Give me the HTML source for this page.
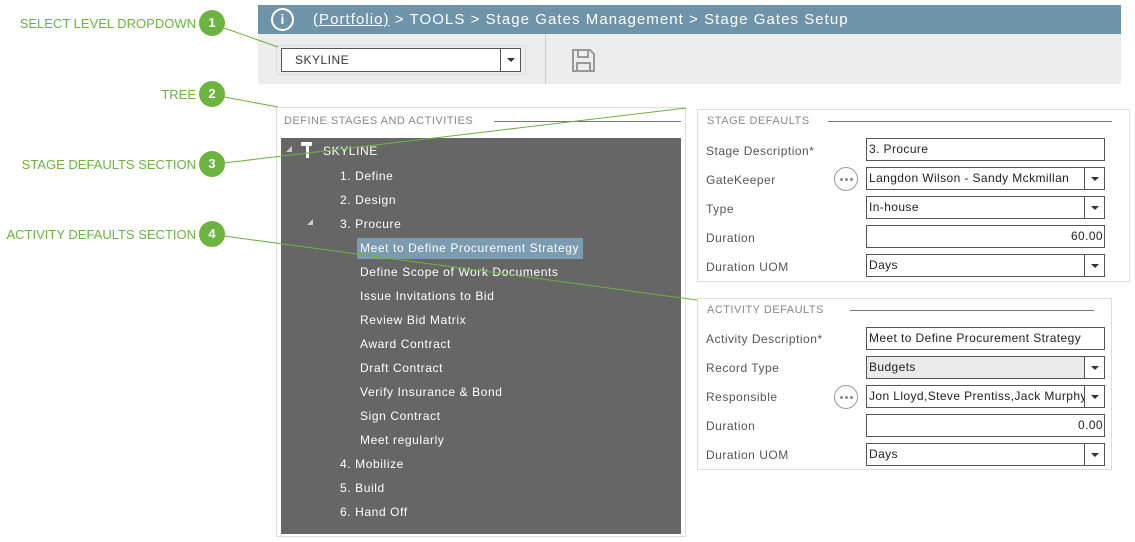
<!DOCTYPE html>
<html><head><meta charset="utf-8"><style>
*{box-sizing:border-box;margin:0;padding:0}
body{width:1135px;height:542px;background:#fff;position:relative;overflow:hidden;font-family:"Liberation Sans",sans-serif}
.a{position:absolute}
.co{position:absolute;color:#6cb33f;font-size:13px;text-align:right;width:200px;left:-4px}
.cir{position:absolute;width:26px;height:26px;border-radius:50%;background:#6cb33f;color:#fff;font-weight:bold;font-size:13px;text-align:center;line-height:26px}
.t{position:absolute;color:#fff;font-size:12px;letter-spacing:0.6px;white-space:nowrap}
.lbl{position:absolute;color:#555;font-size:12px;letter-spacing:0.5px;left:8px}
.in{position:absolute;left:168px;width:239px;height:23px;border:1px solid #555;background:#fff;font-size:12px;letter-spacing:0.4px;line-height:21px;padding-left:2px;color:#222;white-space:nowrap;overflow:hidden}
.dd::after{content:"";position:absolute;right:0;top:0;width:19px;height:21px;border-left:1px solid #555;background:#fff}
.dd::before{content:"";position:absolute;right:5px;top:9px;border-left:4px solid transparent;border-right:4px solid transparent;border-top:4px solid #333;z-index:2}
.dots{position:absolute;left:136px;width:24px;height:24px;border:1px solid #999;border-radius:50%}
.dots i{position:absolute;top:10px;width:3px;height:3px;border-radius:50%;background:#888}
.sec{position:absolute;border:1px solid #ddd;background:#fff}
.st{position:absolute;left:9px;top:5px;color:#888;font-size:11px;letter-spacing:0.5px}
</style></head><body>
<div class="a" style="left:258px;top:5px;width:863px;height:29px;background:#6f94a9"></div>
<div class="a" style="left:271px;top:8px;width:23px;height:23px;border:2px solid #fff;border-radius:50%;color:#fff;font-size:14px;font-weight:bold;text-align:center;line-height:19px">i</div>
<div class="a" style="left:313px;top:11px;color:#fff;font-size:15px;letter-spacing:1.05px;white-space:nowrap"><u>(Portfolio)</u> &gt; TOOLS &gt; Stage Gates Management &gt; Stage Gates Setup</div>
<div class="a" style="left:258px;top:34px;width:863px;height:50px;background:#ededed"></div>
<div class="a" style="left:545px;top:34px;width:1px;height:50px;background:#ccc"></div>
<div class="a" style="left:276px;top:45px;width:250px;height:30px;border:1px solid #ddd"></div>
<div class="a" style="left:281px;top:48px;width:240px;height:24px;border:1px solid #555;background:#fff;font-size:12px;letter-spacing:0.5px;line-height:22px;padding-left:13px;color:#333">SKYLINE</div>
<div class="a" style="left:500px;top:48px;width:21px;height:24px;border:1px solid #555;background:#fff"></div>
<div class="a" style="left:507px;top:58px;border-left:4px solid transparent;border-right:4px solid transparent;border-top:4px solid #333"></div>
<svg class="a" style="left:571px;top:48px" width="25" height="25" viewBox="0 0 25 25"><path d="M2 2h17l4 4v17H2z" fill="none" stroke="#999" stroke-width="2"/><rect x="7" y="2" width="10" height="7" fill="none" stroke="#999" stroke-width="2"/><rect x="6" y="15" width="13" height="8" fill="none" stroke="#999" stroke-width="2"/></svg>

<div class="a" style="left:276px;top:107px;width:410px;height:430px;border:1px solid #ddd"></div>
<div class="a" style="left:284px;top:115px;color:#888;font-size:11px;letter-spacing:0.5px">DEFINE STAGES AND ACTIVITIES</div>
<div class="a" style="left:494px;top:121px;width:187px;height:1px;background:#777"></div>
<div class="a" style="left:281px;top:138px;width:400px;height:396px;background:#666"></div>
<div class="a" style="left:286px;top:146px;border-left:6px solid transparent;border-bottom:6px solid #ccc"></div>
<div class="a" style="left:306px;top:144px;width:3px;height:14px;background:#fff"></div>
<div class="a" style="left:301px;top:142px;width:11px;height:4px;background:#fff;border-radius:1px"></div>
<div class="t" style="left:323px;top:144px">SKYLINE</div>
<div class="t" style="left:340px;top:169px">1. Define</div>
<div class="t" style="left:340px;top:193px">2. Design</div>
<div class="a" style="left:307px;top:219px;border-left:6px solid transparent;border-bottom:6px solid #ccc"></div>
<div class="t" style="left:340px;top:217px">3. Procure</div>
<div class="a" style="left:357px;top:238px;width:226px;height:21px;background:#7a9bb0"></div>
<div class="t" style="left:360px;top:241px">Meet to Define Procurement Strategy</div>
<div class="t" style="left:360px;top:265px">Define Scope of Work Documents</div>
<div class="t" style="left:360px;top:289px">Issue Invitations to Bid</div>
<div class="t" style="left:360px;top:313px">Review Bid Matrix</div>
<div class="t" style="left:360px;top:337px">Award Contract</div>
<div class="t" style="left:360px;top:361px">Draft Contract</div>
<div class="t" style="left:360px;top:385px">Verify Insurance &amp; Bond</div>
<div class="t" style="left:360px;top:409px">Sign Contract</div>
<div class="t" style="left:360px;top:433px">Meet regularly</div>
<div class="t" style="left:340px;top:457px">4. Mobilize</div>
<div class="t" style="left:340px;top:481px">5. Build</div>
<div class="t" style="left:340px;top:505px">6. Hand Off</div>

<div class="sec" style="left:697px;top:109px;width:433px;height:173px">
<div class="st">STAGE DEFAULTS</div>
<div class="a" style="left:130px;top:11px;width:284px;height:1px;background:#777"></div>
<div class="lbl" style="top:34px">Stage Description*</div><div class="in" style="top:28px">3. Procure</div>
<div class="lbl" style="top:63px">GateKeeper</div><div class="dots" style="top:57px"><i style="left:5px"></i><i style="left:10px"></i><i style="left:15px"></i></div><div class="in dd" style="top:57px">Langdon Wilson - Sandy Mckmillan</div>
<div class="lbl" style="top:92px">Type</div><div class="in dd" style="top:86px">In-house</div>
<div class="lbl" style="top:121px">Duration</div><div class="in" style="top:115px;text-align:right;padding-right:1px">60.00</div>
<div class="lbl" style="top:150px">Duration UOM</div><div class="in dd" style="top:144px">Days</div>
</div>
<div class="sec" style="left:697px;top:298px;width:415px;height:172px">
<div class="st">ACTIVITY DEFAULTS</div>
<div class="a" style="left:152px;top:11px;width:244px;height:1px;background:#777"></div>
<div class="lbl" style="top:33px">Activity Description*</div><div class="in" style="top:28px">Meet to Define Procurement Strategy</div>
<div class="lbl" style="top:62px">Record Type</div><div class="in dd" style="top:57px;background:#ebebeb">Budgets</div>
<div class="lbl" style="top:91px">Responsible</div><div class="dots" style="top:86px"><i style="left:5px"></i><i style="left:10px"></i><i style="left:15px"></i></div><div class="in dd" style="top:86px">Jon Lloyd,Steve Prentiss,Jack Murphy,Sa</div>
<div class="lbl" style="top:120px">Duration</div><div class="in" style="top:115px;text-align:right;padding-right:1px">0.00</div>
<div class="lbl" style="top:149px">Duration UOM</div><div class="in dd" style="top:144px">Days</div>
</div>

<svg class="a" style="left:0;top:0" width="1135" height="542"><g stroke="#6cb33f" stroke-width="1" fill="none">
<line x1="224" y1="28" x2="278" y2="47"/><line x1="224" y1="97" x2="278" y2="107"/>
<line x1="224" y1="163" x2="686" y2="108"/><line x1="224" y1="236" x2="697" y2="300"/></g></svg>
<div class="co" style="top:16px">SELECT LEVEL DROPDOWN</div><div class="cir" style="left:199px;top:10px">1</div>
<div class="co" style="top:87px">TREE</div><div class="cir" style="left:199px;top:81px">2</div>
<div class="co" style="top:157px">STAGE DEFAULTS SECTION</div><div class="cir" style="left:199px;top:151px">3</div>
<div class="co" style="top:227px">ACTIVITY DEFAULTS SECTION</div><div class="cir" style="left:199px;top:221px">4</div>
</body></html>
